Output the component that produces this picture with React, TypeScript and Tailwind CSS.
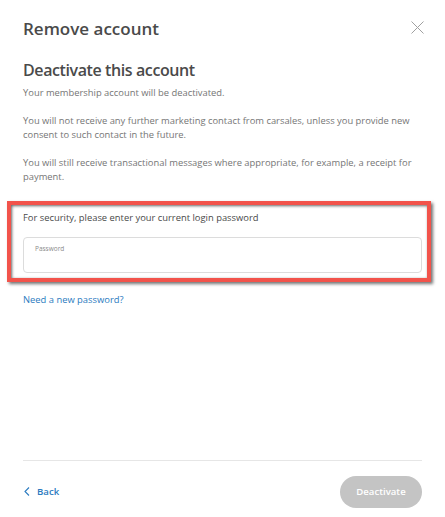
import React, { useState } from "react";

const font = { fontFamily: '"Open Sans", "Noto Sans", sans-serif' };

export default function App() {
  const [password, setPassword] = useState("");

  return (
    <div className="flex h-[517px] w-[445px] flex-col bg-white px-[23px] text-[#4a4a4a]" style={font}>
      <header className="flex items-start justify-between pt-[17px]">
        <h1 className="text-[17px] font-semibold leading-[24px] text-[#4a4a4a]">Remove account</h1>
        <button type="button" aria-label="Close" className="mt-[4px] mr-[-2px] text-[#a0a0a0]">
          <svg width="13" height="13" viewBox="0 0 13 13" fill="none" stroke="currentColor" strokeWidth="1">
            <path d="M0.5 0.5 L12.5 12.5 M12.5 0.5 L0.5 12.5" />
          </svg>
        </button>
      </header>

      <section className="mt-[17px]">
        <h2 className="text-[16px] font-semibold leading-[24px] tracking-[-0.4px] text-[#4a4a4a]">Deactivate this account</h2>
        <div className="mt-[4px] space-y-[13px] text-[9.4px] leading-[14.5px] text-[#767676]">
          <p>Your membership account will be deactivated.</p>
          <p>You will not receive any further marketing contact from carsales, unless you provide new consent to such contact in the future.</p>
          <p>You will still receive transactional messages where appropriate, for example, a receipt for payment.</p>
        </div>
      </section>

      <div className="mt-[16px] ml-[-16px] mr-[-9px] border-[4px] border-[#f2534b] pt-[6px] pr-[5px] pb-[5px] pl-[12px] shadow-[2px_2px_3px_rgba(0,0,0,0.55),inset_1px_1px_3px_rgba(0,0,0,0.6)]">
        <label htmlFor="password" className="block text-[9.4px] leading-[14px] text-[#4a4a4a]">
          For security, please enter your current login password
        </label>
        <div className="relative mt-[12px] h-[36px] rounded-[4px] border border-[#dcdcdc] bg-white">
          <span className="absolute left-[11px] top-[6px] text-[6.5px] leading-[10px] text-[#8a8a8a]">Password</span>
          <input
            id="password"
            type="password"
            value={password}
            onChange={(e) => setPassword(e.target.value)}
            className="h-full w-full rounded-[4px] bg-transparent px-[11px] pt-[12px] text-[10px] outline-none"
          />
        </div>
      </div>

      <a href="#" className="mt-[11px] text-[9.4px] leading-[14px] text-[#2b7bc0]">
        Need a new password?
      </a>

      <footer className="mt-auto mb-[9px] border-t border-[#e6e6e6] pt-[15px]">
        <div className="flex items-center justify-between">
          <a href="#" className="flex items-center gap-[7px] pl-[1px] text-[9.6px] font-semibold text-[#2b7bc0]">
            <svg width="6" height="9" viewBox="0 0 6 9" fill="none" stroke="currentColor" strokeWidth="1.1">
              <path d="M5 0.5 L1 4.5 L5 8.5" />
            </svg>
            Back
          </a>
          <button
            type="button"
            disabled
            className="h-[32px] w-[82px] rounded-full bg-[#c4c4c4] text-[9.6px] font-semibold text-white"
          >
            Deactivate
          </button>
        </div>
      </footer>
    </div>
  );
}
